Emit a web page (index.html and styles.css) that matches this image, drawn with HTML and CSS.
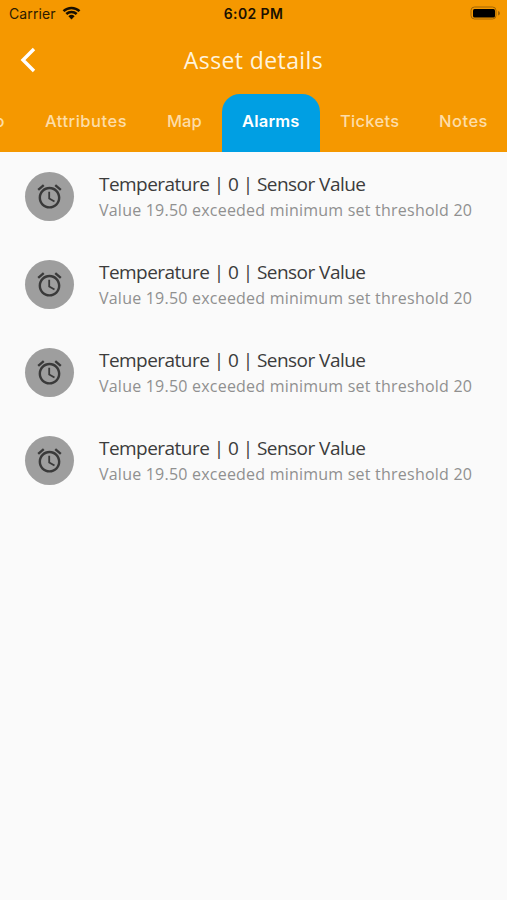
FILE: index.html
```html
<!DOCTYPE html>
<html lang="en">
<head>
  <meta charset="UTF-8">
  <title>Asset details</title>
  <link rel="stylesheet" href="styles.css">
</head>
<body>
  <svg width="0" height="0" class="symbols">
    <symbol id="alarm" viewBox="0 0 24 24">
      <path d="M22 5.72l-4.6-3.86-1.29 1.53 4.6 3.86L22 5.72zM7.88 3.39L6.6 1.86 2 5.71l1.29 1.53 4.59-3.85zM12.5 8H11v6l4.75 2.85.75-1.23-4-2.37V8zM12 4c-4.97 0-9 4.03-9 9s4.02 9 9 9c4.97 0 9-4.03 9-9s-4.03-9-9-9zm0 16c-3.87 0-7-3.13-7-7s3.13-7 7-7 7 3.13 7 7-3.13 7-7 7z"/>
    </symbol>
  </svg>

  <header>
    <div class="status-bar">
      <div class="carrier">
        <span>Carrier</span>
        <svg class="wifi" viewBox="0 0 18 14">
          <path d="M1 5.1a11.6 11.6 0 0 1 16 0M3.8 8a7.5 7.5 0 0 1 10.4 0"/>
          <path class="dot" d="M9 13.4L5.9 10.2a4.5 4.5 0 0 1 6.2 0z"/>
        </svg>
      </div>
      <span class="time">6:02 PM</span>
      <div class="battery-wrap">
        <svg class="battery" viewBox="0 0 31 14">
          <rect class="shell" x="1" y="1" width="25" height="12" rx="3.5"/>
          <rect x="3" y="3" width="22" height="8.5" rx="1.5"/>
          <path class="cap" d="M28 5v4.500q2-.6 2-2.250t-2-2.250z"/>
        </svg>
      </div>
    </div>

    <div class="title-bar">
      <svg class="back" viewBox="0 0 16 26">
        <path d="M14 2L3 13l11 11"/>
      </svg>
      <h1>Asset details</h1>
    </div>

    <nav class="tabs">
      <a class="tab">Info</a>
      <a class="tab attributes">Attributes</a>
      <a class="tab map">Map</a>
      <a class="tab alarms active">Alarms</a>
      <a class="tab tickets">Tickets</a>
      <a class="tab notes">Notes</a>
    </nav>
  </header>

  <main>
    <div class="alarm">
      <div class="avatar"><svg><use href="#alarm"/></svg></div>
      <div class="info">
        <div class="name"><span>Temperature | 0 | Sensor Value</span></div>
        <div class="message"><span>Value 19.50 exceeded minimum set threshold 20</span></div>
      </div>
    </div>
    <div class="alarm">
      <div class="avatar"><svg><use href="#alarm"/></svg></div>
      <div class="info">
        <div class="name"><span>Temperature | 0 | Sensor Value</span></div>
        <div class="message"><span>Value 19.50 exceeded minimum set threshold 20</span></div>
      </div>
    </div>
    <div class="alarm">
      <div class="avatar"><svg><use href="#alarm"/></svg></div>
      <div class="info">
        <div class="name"><span>Temperature | 0 | Sensor Value</span></div>
        <div class="message"><span>Value 19.50 exceeded minimum set threshold 20</span></div>
      </div>
    </div>
    <div class="alarm">
      <div class="avatar"><svg><use href="#alarm"/></svg></div>
      <div class="info">
        <div class="name"><span>Temperature | 0 | Sensor Value</span></div>
        <div class="message"><span>Value 19.50 exceeded minimum set threshold 20</span></div>
      </div>
    </div>
  </main>
</body>
</html>
```
FILE: styles.css
```css
* {
  box-sizing: border-box;
}

body {
  margin: 0;
  min-height: 100vh;
  background-color: #fafafa;
  font-family: "Open Sans", sans-serif;
  overflow: hidden;
}

.symbols {
  display: block;
}

header {
  height: 152px;
  background-color: #f59800;
}

.status-bar {
  display: grid;
  grid-template-columns: 1fr auto 1fr;
  align-items: center;
  height: 26px;
  padding: 0 6px 0 9px;
  font-family: Inter, sans-serif;
  font-size: 14px;
  color: #2b1b00;
}

.carrier {
  display: flex;
  align-items: center;
  gap: 6px;
  letter-spacing: 0.1px;
}

.wifi {
  width: 19px;
  height: 14px;
  fill: none;
  stroke: #1a1000;
  stroke-width: 2.5;
}

.wifi .dot {
  fill: #1a1000;
  stroke: none;
}

.time {
  padding-right: 3px;
  font-weight: 600;
  letter-spacing: 0.4px;
  color: #1a1000;
}

.battery-wrap {
  display: flex;
  justify-content: flex-end;
}

.battery {
  width: 31px;
  height: 14px;
}

.battery .shell {
  fill: none;
  stroke: #a16606;
}

.battery .cap {
  fill: #a16606;
}

.title-bar {
  display: grid;
  grid-template-columns: 40px 1fr 40px;
  align-items: center;
  height: 68px;
  padding: 0 20px 1px;
}

.back {
  width: 16px;
  height: 26px;
  fill: none;
  stroke: #fff;
  stroke-width: 3.4;
}

h1 {
  margin: 0;
  font-size: 23px;
  font-weight: 400;
  letter-spacing: 0.4px;
  line-height: 30px;
  text-align: center;
  color: #fff3dc;
}

.tabs {
  display: flex;
  justify-content: flex-end;
  height: 58px;
  overflow: hidden;
  font-family: Inter, sans-serif;
  font-size: 16.5px;
  font-weight: 500;
  letter-spacing: 0.5px;
}

.tab {
  display: flex;
  flex: none;
  align-items: center;
  padding: 0 20px 4px;
  color: #fddda8;
}

.attributes {
  width: 122px;
}

.map {
  width: 75px;
  letter-spacing: 0;
}

.alarms {
  width: 98px;
}

.tickets {
  width: 99px;
  letter-spacing: 0.3px;
}

.notes {
  width: 88px;
}

.tab.active {
  background-color: #009fe3;
  border-radius: 18px 18px 0 0;
  font-weight: 600;
  letter-spacing: 0.2px;
  color: #fff;
}

.alarm {
  display: flex;
  align-items: center;
  gap: 25px;
  height: 88px;
  padding-left: 25px;
}

.avatar {
  display: flex;
  align-items: center;
  justify-content: center;
  width: 49px;
  height: 49px;
  border-radius: 50%;
  background-color: #9e9e9e;
}

.avatar svg {
  width: 29px;
  height: 29px;
  fill: #3a3a3a;
}

.info {
  padding-top: 3px;
  white-space: nowrap;
}

.name {
  font-size: 19px;
  line-height: 25px;
  letter-spacing: -0.54px;
  color: #3c3c3c;
}

.message {
  font-size: 16px;
  line-height: 26px;
  letter-spacing: 0.22px;
  color: #909090;
}
```
